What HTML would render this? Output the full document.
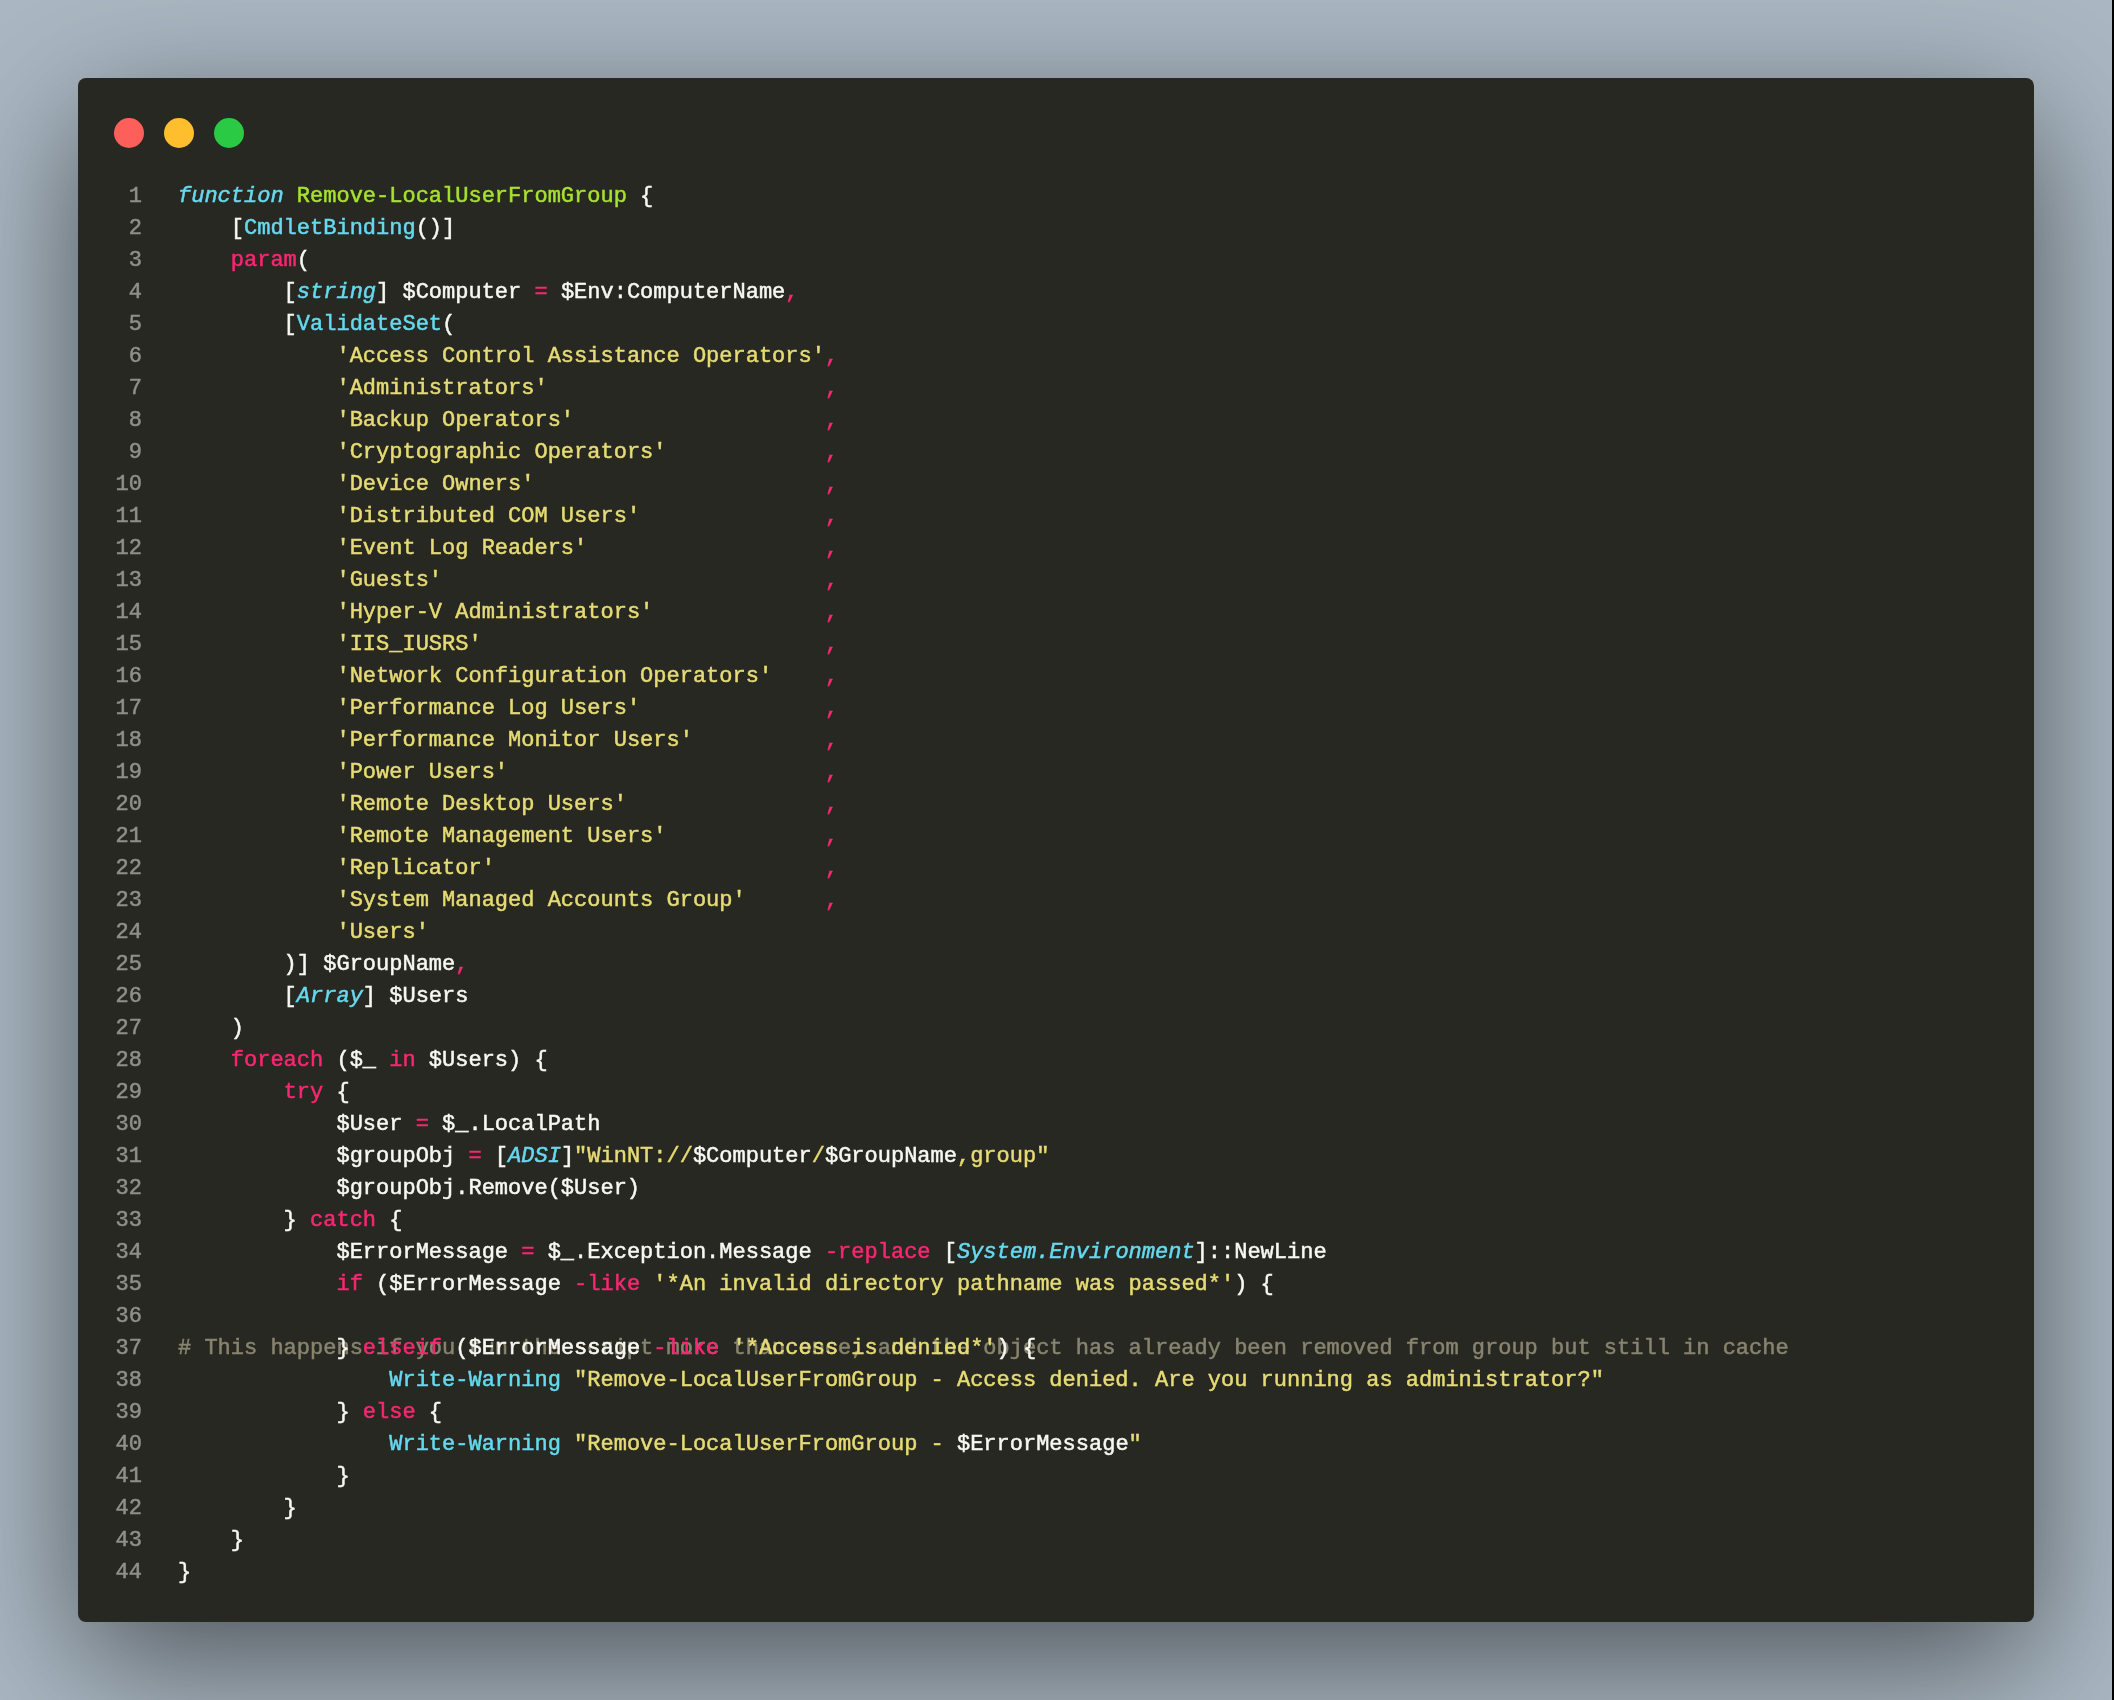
<!DOCTYPE html>
<html><head><meta charset="utf-8">
<style>
html,body{margin:0;padding:0;}
body{width:2114px;height:1700px;overflow:hidden;position:relative;background:#abb8c3;font-family:"Liberation Mono",monospace;}
#win{-webkit-text-stroke:0.5px currentColor;position:absolute;left:78px;top:78px;width:1956px;height:1544px;background:#272822;border-radius:8px;box-shadow:0 40px 136px rgba(0,0,0,0.55);}
.dot{position:absolute;top:40px;width:30px;height:30px;border-radius:50%;}
#nums{will-change:transform;position:absolute;left:0;top:103px;width:64px;text-align:right;color:#90908a;font-size:22px;line-height:32px;}
#code{will-change:transform;position:absolute;left:100px;top:103px;color:#f8f8f2;font-size:22px;line-height:32px;}
.ln{height:32px;position:relative;white-space:pre;}
.ov{position:absolute;left:0;top:0;}
.k{color:#f92672}.f{color:#a6e22e}.t{color:#66d9ef}.ti{color:#66d9ef;font-style:italic}.s{color:#e6db74}.c{color:#88846f}
#strip{position:absolute;right:0;top:0;width:2px;height:1700px;background:#000;}
</style></head><body>
<div id="win">
<div class="dot" style="left:36px;background:#ff5f5a"></div>
<div class="dot" style="left:86px;background:#ffbe2e"></div>
<div class="dot" style="left:136px;background:#2aca44"></div>
<div id="nums"><div>1</div><div>2</div><div>3</div><div>4</div><div>5</div><div>6</div><div>7</div><div>8</div><div>9</div><div>10</div><div>11</div><div>12</div><div>13</div><div>14</div><div>15</div><div>16</div><div>17</div><div>18</div><div>19</div><div>20</div><div>21</div><div>22</div><div>23</div><div>24</div><div>25</div><div>26</div><div>27</div><div>28</div><div>29</div><div>30</div><div>31</div><div>32</div><div>33</div><div>34</div><div>35</div><div>36</div><div>37</div><div>38</div><div>39</div><div>40</div><div>41</div><div>42</div><div>43</div><div>44</div></div>
<div id="code"><div class="ln"><span class="ti">function</span> <span class="f">Remove-LocalUserFromGroup</span> {</div>
<div class="ln">    [<span class="t">CmdletBinding</span>()]</div>
<div class="ln">    <span class="k">param</span>(</div>
<div class="ln">        [<span class="ti">string</span>] $Computer <span class="k">=</span> $Env:ComputerName<span class="k">,</span></div>
<div class="ln">        [<span class="t">ValidateSet</span>(</div>
<div class="ln">            <span class="s">'Access Control Assistance Operators'</span><span class="k">,</span></div>
<div class="ln">            <span class="s">'Administrators'</span>                     <span class="k">,</span></div>
<div class="ln">            <span class="s">'Backup Operators'</span>                   <span class="k">,</span></div>
<div class="ln">            <span class="s">'Cryptographic Operators'</span>            <span class="k">,</span></div>
<div class="ln">            <span class="s">'Device Owners'</span>                      <span class="k">,</span></div>
<div class="ln">            <span class="s">'Distributed COM Users'</span>              <span class="k">,</span></div>
<div class="ln">            <span class="s">'Event Log Readers'</span>                  <span class="k">,</span></div>
<div class="ln">            <span class="s">'Guests'</span>                             <span class="k">,</span></div>
<div class="ln">            <span class="s">'Hyper-V Administrators'</span>             <span class="k">,</span></div>
<div class="ln">            <span class="s">'IIS_IUSRS'</span>                          <span class="k">,</span></div>
<div class="ln">            <span class="s">'Network Configuration Operators'</span>    <span class="k">,</span></div>
<div class="ln">            <span class="s">'Performance Log Users'</span>              <span class="k">,</span></div>
<div class="ln">            <span class="s">'Performance Monitor Users'</span>          <span class="k">,</span></div>
<div class="ln">            <span class="s">'Power Users'</span>                        <span class="k">,</span></div>
<div class="ln">            <span class="s">'Remote Desktop Users'</span>               <span class="k">,</span></div>
<div class="ln">            <span class="s">'Remote Management Users'</span>            <span class="k">,</span></div>
<div class="ln">            <span class="s">'Replicator'</span>                         <span class="k">,</span></div>
<div class="ln">            <span class="s">'System Managed Accounts Group'</span>      <span class="k">,</span></div>
<div class="ln">            <span class="s">'Users'</span></div>
<div class="ln">        )] $GroupName<span class="k">,</span></div>
<div class="ln">        [<span class="ti">Array</span>] $Users</div>
<div class="ln">    )</div>
<div class="ln">    <span class="k">foreach</span> ($_ <span class="k">in</span> $Users) {</div>
<div class="ln">        <span class="k">try</span> {</div>
<div class="ln">            $User <span class="k">=</span> $_.LocalPath</div>
<div class="ln">            $groupObj <span class="k">=</span> [<span class="ti">ADSI</span>]<span class="s">"WinNT://</span>$Computer<span class="s">/</span>$GroupName<span class="s">,group"</span></div>
<div class="ln">            $groupObj.Remove($User)</div>
<div class="ln">        } <span class="k">catch</span> {</div>
<div class="ln">            $ErrorMessage <span class="k">=</span> $_.Exception.Message <span class="k">-replace</span> [<span class="ti">System.Environment</span>]::NewLine</div>
<div class="ln">            <span class="k">if</span> ($ErrorMessage <span class="k">-like</span> <span class="s">'*An invalid directory pathname was passed*'</span>) {</div>
<div class="ln">&#8203;</div>
<div class="ln"><span class="c"># This happens if you run the script more than once, and the object has already been removed from group but still in cache</span><div class="ov">            } <span class="k">elseif</span> ($ErrorMessage <span class="k">-like</span> <span class="s">'*Access is denied*'</span>) {</div></div>
<div class="ln">                <span class="t">Write-Warning</span> <span class="s">"Remove-LocalUserFromGroup - Access denied. Are you running as administrator?"</span></div>
<div class="ln">            } <span class="k">else</span> {</div>
<div class="ln">                <span class="t">Write-Warning</span> <span class="s">"Remove-LocalUserFromGroup - </span>$ErrorMessage<span class="s">"</span></div>
<div class="ln">            }</div>
<div class="ln">        }</div>
<div class="ln">    }</div>
<div class="ln">}</div></div>
</div>
<div id="strip"></div>
</body></html>
